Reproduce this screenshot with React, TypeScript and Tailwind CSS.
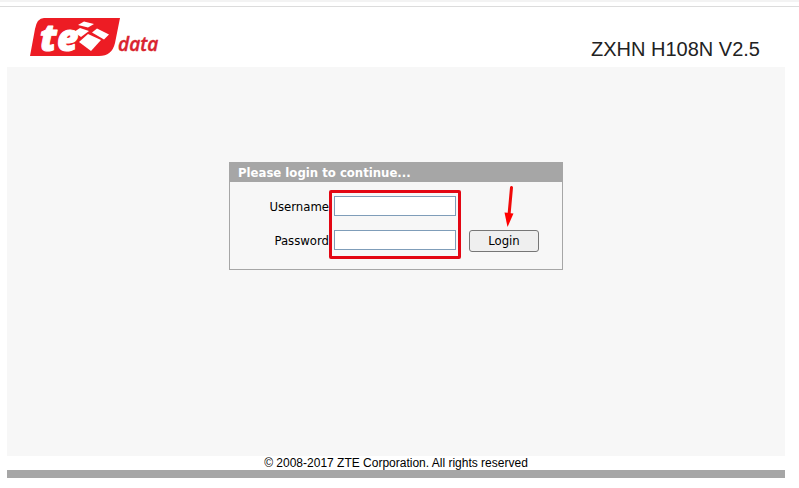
function TedataLogo() {
  return (
    <svg
      width="132"
      height="56"
      viewBox="0 -8 132 56"
      role="img"
      aria-label="TE Data"
    >
      <path d="M14 1H90L85 26Q82 39 69 39H0L5 12Q7 1 14 1Z" fill="#ed1c24" />
      <text
        x="10"
        y="34"
        fill="#fff"
        stroke="#fff"
        strokeWidth="1"
        strokeLinejoin="round"
        fontFamily="Open Sans, sans-serif"
        fontWeight="800"
        fontStyle="italic"
        fontSize="37"
      >
        t<tspan x="27">e</tspan>
      </text>
      <path d="M48 8L54 4.500L64 7L58 10.500Z" fill="#fff" />
      <path d="M62 15.500L67 11.500L79 17.500L74 22.500Z" fill="#fff" />
      <path d="M44 15L50 11L59 14L51 20Z" fill="#fff" />
      <path d="M49 25L58 17L71 23L61 34Z" fill="#fff" />
      <text
        x="88"
        y="34"
        fill="#d9232e"
        stroke="#d9232e"
        strokeWidth="0.4"
        fontFamily="Open Sans, sans-serif"
        fontWeight="600"
        fontStyle="italic"
        fontSize="19"
      >
        data
      </text>
    </svg>
  );
}

function Header() {
  return (
    <header className="flex h-15 items-start justify-between pr-[25px] pl-[23px]">
      <div className="pt-[2px]">
        <TedataLogo />
      </div>
      <h1 className="pt-[30px] text-[20px] leading-6 text-[#222]">
        ZXHN H108N V2.5
      </h1>
    </header>
  );
}

function LoginForm() {
  return (
    <form
      className="mx-auto w-[334px] border border-[#a6a6a6] font-['DejaVu_Sans_Condensed','DejaVu_Sans',sans-serif] text-[13px] text-black"
      onSubmit={(e) => e.preventDefault()}
    >
      <h2 className="bg-[#a6a6a6] pl-2 leading-[19px] font-bold text-white">
        Please login to continue...
      </h2>
      <div className="relative grid grid-cols-[99px_122px_70px] gap-y-3 pt-[14px] pb-[17px]">
        <label htmlFor="username" className="text-right leading-[22px]">
          Username
        </label>
        <input
          id="username"
          type="text"
          className="ml-[5px] h-5 w-[122px] border border-[#7f9db9] bg-white px-1 outline-none"
        />
        <span />
        <label htmlFor="password" className="text-right leading-[22px]">
          Password
        </label>
        <input
          id="password"
          type="password"
          className="ml-[5px] h-5 w-[122px] border border-[#7f9db9] bg-white px-1 outline-none"
        />
        <button
          type="submit"
          className="ml-[18px] h-[22px] w-[70px] rounded-[3px] border border-[#767676] bg-[#efefef] leading-5"
        >
          Login
        </button>
        <div className="pointer-events-none absolute top-2 left-[99px] h-[69px] w-[132px] rounded-[2px] border-3 border-[#e30613]" />
        <svg
          className="pointer-events-none absolute top-1 left-[272px]"
          width="14"
          height="42"
          viewBox="0 0 14 42"
          aria-hidden="true"
        >
          <path
            d="M9.5 1.5L7 29"
            stroke="#f00a0a"
            strokeWidth="3"
            strokeLinecap="round"
          />
          <path d="M2.500 26.500L11.500 27.500L5.500 41Z" fill="#f00" />
        </svg>
      </div>
    </form>
  );
}

export default function App() {
  return (
    <div className="min-h-screen bg-white font-['Liberation_Sans',Arial,sans-serif]">
      <div className="h-[7px] border-t-2 border-b border-t-[#f3f3f3] border-b-[#dcdcdc]" />
      <div className="mr-[14px] ml-[7px]">
        <Header />
        <main className="min-h-[389px] bg-[#f7f7f7] pt-[95px]">
          <LoginForm />
        </main>
        <footer className="border-b-8 border-[#a6a6a6] text-center text-[12px] leading-[14px] text-black">
          © 2008-2017 ZTE Corporation. All rights reserved
        </footer>
      </div>
    </div>
  );
}
